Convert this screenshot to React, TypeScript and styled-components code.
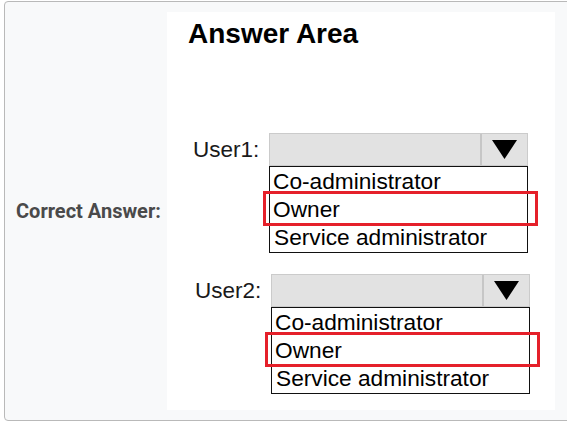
import React from "react";
import styled, { createGlobalStyle } from "styled-components";

const Global = createGlobalStyle`
  html, body { margin: 0; padding: 0; background: #ffffff; overflow: hidden; }
  body { width: 567px; height: 428px; }
`;

const Card = styled.div`
  margin: 1px 0 0 4px;
  width: 580px;
  height: 420px;
  box-sizing: border-box;
  border: 1px solid #b9b9b9;
  border-radius: 4px;
  background: #f8f9fa;
  display: flex;
  align-items: stretch;
`;

const SideLabel = styled.div`
  width: 162px;
  flex: none;
  display: flex;
  align-items: center;
  padding-left: 11px;
  box-sizing: border-box;
  font-family: Roboto, "Liberation Sans", sans-serif;
  font-weight: 700;
  font-size: 20px;
  color: #4a4a4a;
  white-space: nowrap;
`;

const Panel = styled.div`
  margin: 10px 0 10px 0;
  width: 388px;
  background: #ffffff;
  padding: 6px 0 0 21px;
  box-sizing: border-box;
  font-family: "Liberation Sans", Arial, sans-serif;
  color: #000;
`;

const Heading = styled.div`
  font-size: 28px;
  font-weight: 700;
  line-height: 31px;
`;

const Group = styled.div<{ $top: number; $shift: number }>`
  margin-top: ${(p) => p.$top}px;
  margin-left: ${(p) => p.$shift}px;
  display: grid;
  grid-template-columns: 81px 259px;
`;

const UserLabel = styled.div`
  height: 33px;
  display: flex;
  align-items: center;
  padding-left: 5px;
  font-size: 22.5px;
  color: #1a1a1a;
`;

const Select = styled.div`
  height: 33px;
  box-sizing: border-box;
  border: 1px solid #cbcbcb;
  background: #e2e2e2;
  display: flex;
  justify-content: flex-end;
`;

const ArrowButton = styled.div`
  width: 45px;
  border-left: 2px solid #c6c6c6;
  display: flex;
  align-items: center;
  justify-content: center;
`;

const List = styled.div`
  grid-column: 2;
  border: 1px solid #111;
  display: flex;
  flex-direction: column;
  padding: 0 0 1px 0;
`;

const Item = styled.div<{ $pad: number }>`
  position: relative;
  height: 28px;
  line-height: 28px;
  padding-left: ${(p) => p.$pad}px;
  font-size: 22.7px;
  white-space: nowrap;
`;

const Highlight = styled.div`
  position: absolute;
  left: -7px;
  right: -11px;
  top: -4px;
  bottom: -3px;
  border: 3px solid #e5202a;
  pointer-events: none;
`;

const Arrow = () => (
  <svg width="25" height="19" viewBox="0 0 25 19">
    <polygon points="0,0 25,0 12.5,19" fill="#000" />
  </svg>
);

const options = ["Co-administrator", "Owner", "Service administrator"];

const UserBlock = ({ name, top, shift }: { name: string; top: number; shift: number }) => (
  <Group $top={top} $shift={shift}>
    <UserLabel>{name}</UserLabel>
    <Select>
      <ArrowButton>
        <Arrow />
      </ArrowButton>
    </Select>
    <List>
      {options.map((o) => (
        <Item key={o} $pad={o === "Service administrator" ? 4 : 3}>
          {o}
          {o === "Owner" && <Highlight />}
        </Item>
      ))}
    </List>
  </Group>
);

export default function App() {
  return (
    <>
      <Global />
      <Card>
        <SideLabel>Correct Answer:</SideLabel>
        <Panel>
          <Heading>Answer Area</Heading>
          <UserBlock name="User1:" top={84} shift={0} />
          <UserBlock name="User2:" top={21} shift={2} />
        </Panel>
      </Card>
    </>
  );
}
